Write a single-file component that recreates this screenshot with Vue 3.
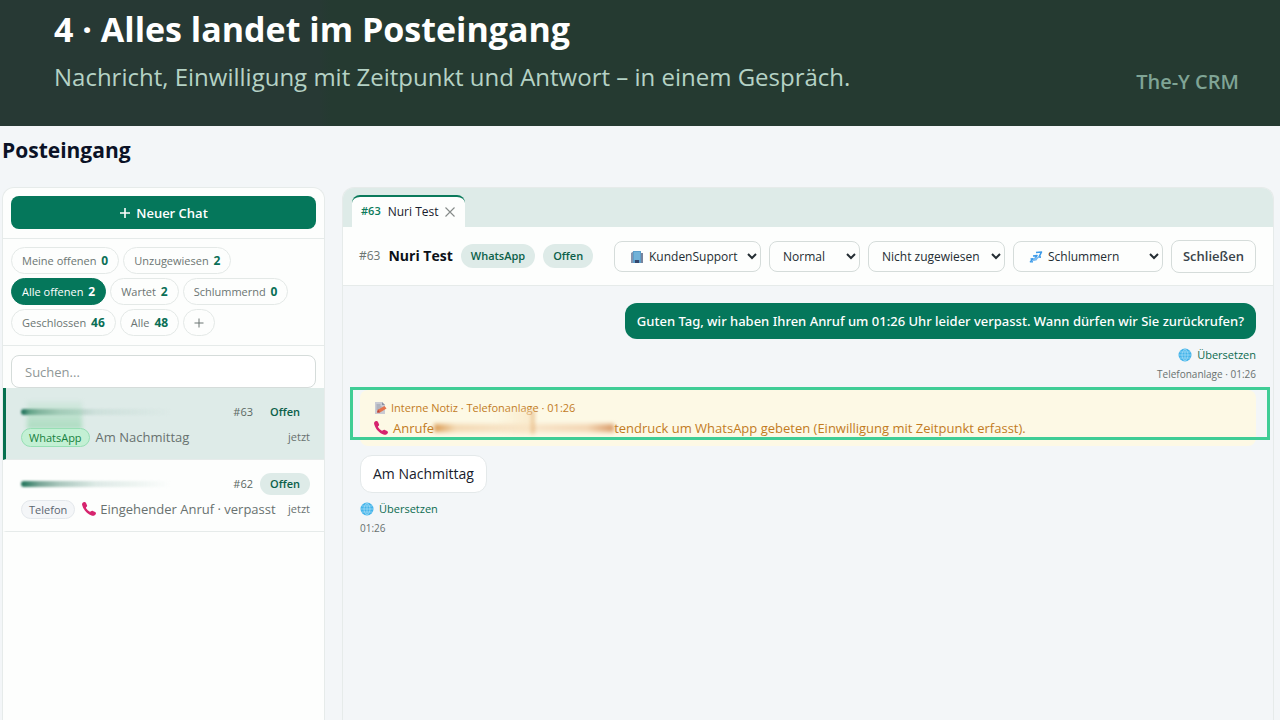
<script setup>
import { ref } from 'vue'

const filters = [
  { label: 'Meine offenen', count: 0 },
  { label: 'Unzugewiesen', count: 2 },
  { label: 'Alle offenen', count: 2, active: true },
  { label: 'Wartet', count: 2 },
  { label: 'Schlummernd', count: 0 },
  { label: 'Geschlossen', count: 46 },
  { label: 'Alle', count: 48 },
]
const team = ref('KundenSupport')
const priority = ref('Normal')
const assignee = ref('Nicht zugewiesen')
const snooze = ref('Schlummern')
const query = ref('')
</script>

<template>
  <div class="page">
    <header class="banner">
      <div>
        <h1>4 · Alles landet im Posteingang</h1>
        <p>Nachricht, Einwilligung mit Zeitpunkt und Antwort – in einem Gespräch.</p>
      </div>
      <span class="brand">The-Y CRM</span>
    </header>

    <h2 class="page-title">Posteingang</h2>

    <main class="columns">
      <aside class="sidebar">
        <div class="new-chat">
          <button type="button">
            <svg viewBox="0 0 12 12" width="12" height="12" aria-hidden="true"><path d="M6 1v10M1 6h10" stroke="currentColor" stroke-width="1.6" fill="none" /></svg>
            Neuer Chat
          </button>
        </div>
        <div class="filters">
          <button v-for="f in filters" :key="f.label" type="button" class="chip" :class="{ active: f.active }">{{ f.label }} <b>{{ f.count }}</b></button>
          <button type="button" class="chip plus" aria-label="Filter hinzufügen">
            <svg viewBox="0 0 10 10" width="10" height="10" aria-hidden="true"><path d="M5 0.5v9M0.5 5h9" stroke="currentColor" stroke-width="1" fill="none" /></svg>
          </button>
        </div>
        <div class="search">
          <input v-model="query" type="text" placeholder="Suchen..." aria-label="Suchen" />
        </div>
        <div class="conversation selected">
          <div class="line">
            <span class="redacted"></span>
            <span class="number">#63</span>
            <span class="state">Offen</span>
          </div>
          <div class="line second">
            <span class="smudge"></span>
            <span class="source whatsapp">WhatsApp</span>
            <span class="preview">Am Nachmittag</span>
            <span class="when">jetzt</span>
          </div>
        </div>
        <div class="conversation">
          <div class="line">
            <span class="redacted"></span>
            <span class="number">#62</span>
            <span class="state">Offen</span>
          </div>
          <div class="line second">
            <span class="source">Telefon</span>
            <span class="preview">
              <svg class="phone" viewBox="0 0 16 16" width="16" height="16" aria-hidden="true"><path d="M1.2 4.2C.6 2.500 1.800 1.200 3.300 1c.8-.1 1.300.3 1.700 1l1 2.200c.3.800 0 1.400-.600 1.900-.6.400-.5.900-.1 1.500.8 1.300 1.900 2.300 3.200 3 .6.300 1 .2 1.500-.3.500-.600 1.100-.800 1.900-.400l2.200 1.100c.8.500 1.100 1.200.700 2-.700 1.500-2.100 2.200-3.700 1.700C6.300 13.100 2.600 9.300 1.200 4.200z" fill="#d6246e" /></svg>
              Eingehender Anruf · verpasst
            </span>
            <span class="when">jetzt</span>
          </div>
        </div>
      </aside>

      <section class="thread">
        <nav class="tabs">
          <div class="tab">
            <a href="#"><b>#63</b> <span>Nuri Test</span></a>
            <button type="button" aria-label="Tab schließen">
              <svg viewBox="0 0 10 10" width="10" height="10" aria-hidden="true"><path d="M0.5 0.5l9 9M9.500 0.5l-9 9" stroke="#858b89" stroke-width="1.1" fill="none" /></svg>
            </button>
          </div>
        </nav>
        <div class="toolbar">
          <span class="id">#63</span>
          <strong>Nuri Test</strong>
          <span class="badge">WhatsApp</span>
          <span class="badge">Offen</span>
          <div class="controls">
            <div class="pick team">
              <svg viewBox="0 0 14 14" width="14" height="14" aria-hidden="true">
                <path d="M1 3l3-2v12H1z" fill="#8794ae" /><path d="M10 3h3v10h-3z" fill="#77839c" />
                <path d="M3 1h8v12H3z" fill="#5c9fcb" /><path d="M4 3h6M4 5h6M4 7h6M4 9h6" stroke="#88c5e5" stroke-width="1" />
                <path d="M5 10h4v3H5z" fill="#34476c" />
              </svg>
              <select v-model="team" aria-label="Team"><option>KundenSupport</option></select>
            </div>
            <div class="pick priority"><select v-model="priority" aria-label="Priorität"><option>Normal</option></select></div>
            <div class="pick assignee"><select v-model="assignee" aria-label="Zuweisung"><option>Nicht zugewiesen</option></select></div>
            <div class="pick snooze">
              <svg viewBox="0 0 14 14" width="14" height="14" aria-hidden="true">
                <path d="M7 2.500l5.500-.5-2.500 5 2 .1M4 6l4-.4-2.800 4 2.500-.2M1.500 9l2.500-.2-2.500 3 2.500-.1" stroke="#3d9be9" stroke-width="1.6" fill="none" stroke-linejoin="round" />
                <path d="M2 12l6-2.500 3-3-5 1z" fill="#7dbcf0" />
              </svg>
              <select v-model="snooze" aria-label="Schlummern"><option>Schlummern</option></select>
            </div>
            <button type="button" class="close">Schließen</button>
          </div>
        </div>

        <div class="messages">
          <div class="outgoing">
            <div class="bubble sent">Guten Tag, wir haben Ihren Anruf um 01:26 Uhr leider verpasst. Wann dürfen wir Sie zurückrufen?</div>
            <a href="#" class="translate">
              <svg viewBox="0 0 14 14" width="14" height="14" aria-hidden="true"><circle cx="7" cy="7" r="6.500" fill="#43b4ea" /><path d="M.5 7h13M1.800 4h10.400M1.800 10h10.400M7 .5v13M7 .5c-4 4-4 9 0 13M7 .5c4 4 4 9 0 13" stroke="#a9def6" stroke-width=".7" fill="none" /></svg>
              Übersetzen
            </a>
            <span class="meta">Telefonanlage · 01:26</span>
          </div>

          <div class="note">
            <div class="note-head">
              <svg viewBox="0 0 14 14" width="14" height="14" aria-hidden="true"><path d="M2 1h7l3 3v9H2z" fill="#c9cbd3" /><path d="M9 1v3h3z" fill="#8d93a5" /><path d="M3.500 4h4M3.500 6h5M3.500 8h3" stroke="#8b90a0" stroke-width=".8" /><path d="M4 11.500l1-3L11.500 5l2 2.500-6.500 4z" fill="#e4744d" /><path d="M4 11.500l1-3 2 3z" fill="#b9433f" /></svg>
              Interne Notiz · Telefonanlage · 01:26
            </div>
            <div class="note-body">
              <svg class="phone" viewBox="0 0 16 16" width="16" height="16" aria-hidden="true"><path d="M1.200 4.200C.6 2.500 1.800 1.200 3.300 1c.8-.1 1.300.3 1.700 1l1 2.200c.3.800 0 1.400-.600 1.900-.6.400-.5.900-.1 1.500.8 1.300 1.900 2.300 3.200 3 .6.300 1 .2 1.500-.3.500-.600 1.100-.800 1.900-.400l2.200 1.100c.8.500 1.100 1.200.700 2-.700 1.500-2.100 2.200-3.700 1.700C6.300 13.100 2.600 9.300 1.200 4.200z" fill="#d6246e" /></svg>
              <span>Anrufe</span><span class="blurred"></span><span>tendruck um WhatsApp gebeten (Einwilligung mit Zeitpunkt erfasst).</span>
            </div>
            <div class="highlight"></div>
          </div>

          <div class="incoming">
            <div class="bubble received">Am Nachmittag</div>
            <a href="#" class="translate">
              <svg viewBox="0 0 14 14" width="14" height="14" aria-hidden="true"><circle cx="7" cy="7" r="6.500" fill="#43b4ea" /><path d="M.5 7h13M1.800 4h10.400M1.800 10h10.400M7 .5v13M7 .5c-4 4-4 9 0 13M7 .5c4 4 4 9 0 13" stroke="#a9def6" stroke-width=".7" fill="none" /></svg>
              Übersetzen
            </a>
            <span class="meta">01:26</span>
          </div>
        </div>
      </section>
    </main>
  </div>
</template>

<style>
body { background: #f3f6f8; }
</style>

<style scoped>
.page {
  display: flex;
  flex-direction: column;
  min-height: 100vh;
  box-sizing: border-box;
  background: #f3f6f8;
  color: #18202c;
  font-family: "Open Sans", "Noto Sans", sans-serif;
  font-size: 12px;
  line-height: 18px;
}
.page * { box-sizing: border-box; }
svg { display: block; flex: none; }
button, input, select { font: inherit; margin: 0; }
button { cursor: pointer; }
a { text-decoration: none; }

.banner {
  display: flex;
  justify-content: space-between;
  align-items: flex-end;
  height: 126px;
  padding: 0 41px 32px 54px;
  background: linear-gradient(90deg, #273934 0, #273934 320px, #253a31 330px);
  white-space: nowrap;
}
.banner h1 { margin: 0; color: #fff; font-size: 34px; line-height: 44px; font-weight: 700; }
.banner p { margin: 9px 0 0; color: #b5d2c5; font-size: 24px; line-height: 34px; }
.brand { color: #7fa495; font-size: 20px; line-height: 24px; font-weight: 600; }

.page-title { margin: 8px 0 21px 2px; font-size: 21px; line-height: 32px; font-weight: 700; color: #0b1226; }

.columns { display: flex; flex: 1; gap: 17px; padding: 0 6px 0 2px; }
.sidebar, .thread {
  border: 1px solid #e6ebea;
  border-bottom: 0;
  border-radius: 12px 12px 0 0;
  overflow: hidden;
}
.sidebar { flex: none; width: 323px; background: #fdfefd; }
.thread { flex: 1; min-width: 0; display: flex; flex-direction: column; }

.new-chat { padding: 8px 8px 9px; border-bottom: 1px solid #e6ebea; }
.new-chat button {
  display: flex; align-items: center; justify-content: center; gap: 5px;
  width: 100%; height: 33px; border: 0; border-radius: 8px;
  background: #05775b; color: #fff; font-size: 13px; font-weight: 600;
}
.filters { display: flex; flex-wrap: wrap; gap: 4px; padding: 8px 8px 9px; border-bottom: 1px solid #e6ebea; }
.chip {
  height: 27px; padding: 0 10px; border: 1px solid #e4e9e7; border-radius: 14px;
  background: #fdfefd; color: #6b7572; font-size: 11px; line-height: 18px; white-space: nowrap;
}
.chip b { margin-left: 2px; color: #0a6f56; font-size: 12px; font-weight: 700; }
.chip.active { background: #05775b; border-color: #05775b; color: #fff; }
.chip.active b { color: #fff; }
.chip.plus { display: flex; align-items: center; }

.search { padding: 9px 8px 0; }
.search input {
  display: block; width: 100%; height: 33px; padding: 0 13px;
  border: 1px solid #d5dcda; border-radius: 8px; background: #fff; font-size: 13px; outline: 0;
}
.search input::placeholder { color: #8f9797; opacity: 1; }

.conversation { padding: 13px 14px 12px 15px; border-left: 3px solid transparent; border-bottom: 1px solid #e6ebea; height: 72px; }
.conversation.selected { background: #deebe8; border-left-color: #06704f; }
.line { display: flex; align-items: center; height: 22px; }
.second { position: relative; height: 20px; margin-top: 4px; }
.redacted { width: 150px; height: 6px; border-radius: 3px; background: linear-gradient(90deg, #1f7359, #78a596 12%, #a9c6bc 25%, rgba(190, 214, 207, .5) 50%, transparent); filter: blur(1px); }
.number { margin-left: auto; margin-right: 7px; color: #5b6864; font-size: 11px; }
.state { padding: 2px 10px; border-radius: 11px; background: #deebe8; color: #0b6049; font-size: 11px; font-weight: 600; }
.smudge { position: absolute; left: 6px; top: -26px; width: 55px; height: 28px; background: linear-gradient(rgba(150, 214, 175, .1), rgba(150, 214, 175, .7)); filter: blur(2px); }
.source {
  position: relative; height: 19px; padding: 0 7px; border: 1px solid #e4e8ec; border-radius: 10px;
  background: #f4f6f8; color: #5b6570; font-size: 11px; line-height: 17px;
}
.source.whatsapp { background: #c3f0d4; border-color: #96dfb4; color: #15803d; }
.preview { display: flex; align-items: center; gap: 3px; margin-left: 6px; color: #68716f; font-size: 13px; white-space: nowrap; }
.when { margin-left: auto; color: #68716f; font-size: 11px; }

.tabs { display: flex; align-items: flex-end; height: 39px; padding-left: 9px; background: #deebe8; }
.tab { display: flex; align-items: center; gap: 7px; height: 32px; padding: 0 10px 0 9px; border-top: 2px solid #0a7a5b; border-radius: 8px 8px 0 0; background: #fdfefd; }
.tab a { display: flex; gap: 7px; color: #18202c; font-weight: 500; }
.tab b { color: #0a7a5b; font-size: 11px; font-weight: 600; line-height: 16px; }
.tab button { padding: 0; border: 0; background: none; }

.toolbar { display: flex; align-items: center; gap: 8px; height: 59px; padding: 0 17px 0 16px; background: #fdfefd; border-bottom: 1px solid #e6ebea; white-space: nowrap; }
.id { color: #6b7572; font-size: 12px; }
.toolbar strong { font-size: 14px; font-weight: 700; color: #0c1118; }
.badge { padding: 3px 10px; border-radius: 12px; background: #deebe8; color: #0b6049; font-size: 11px; font-weight: 600; }
.controls { display: flex; align-items: center; gap: 8px; margin-left: auto; }
.pick { position: relative; }
.pick svg { position: absolute; left: 16px; top: 9px; }
.pick select { display: block; width: 100%; height: 31px; padding: 0 0 0 9px; border: 1px solid #d5dcda; border-radius: 8px; background: #fdfefd; color: #242d33; outline: 0; }
.team { width: 147px; }
.priority { width: 91px; }
.assignee { width: 137px; }
.snooze { width: 150px; }
.team select, .snooze select { padding-left: 30px; }
.close { height: 33px; padding: 0 11px; border: 1px solid #d5dcda; border-radius: 8px; background: #fdfefd; color: #39434a; font-size: 13px; font-weight: 600; }

.messages { display: flex; flex-direction: column; padding: 17px 17px 24px; }
.outgoing, .incoming { display: flex; flex-direction: column; align-items: flex-start; }
.outgoing { align-items: flex-end; }
.bubble { border-radius: 12px; line-height: 20px; }
.sent { padding: 8px 12px; background: #05775b; color: #fff; font-family: "Noto Sans", "Open Sans", sans-serif; font-size: 13px; font-weight: 500; }
.received { padding: 8px 12px; border: 1px solid #e4e9ea; background: #fff; color: #18202c; font-size: 14px; }
.translate { display: flex; align-items: center; gap: 5px; margin-top: 7px; color: #0b6b50; font-size: 11px; }
.meta { margin-top: 2px; color: #68716f; font-size: 10px; line-height: 16px; }
.note { position: relative; height: 56px; margin: 8px 0 9px; padding: 8px 13px; border-radius: 8px; background: #fdf9e5; color: #c27b1e; }
.note-head { display: flex; align-items: center; gap: 4px; height: 20px; font-size: 11px; font-weight: 500; }
.note-body { display: flex; align-items: center; height: 20px; font-size: 13px; font-weight: 500; white-space: nowrap; }
.note-body svg { margin-right: 4px; }
.blurred { position: relative; width: 180px; height: 8px; background: linear-gradient(90deg, #d99850, #f3d9b4 12%, #f8e6cc 50%, #f3d6b4 85%, #d99a68); filter: blur(2px); }
.blurred::after { content: ""; position: absolute; left: 60px; top: -14px; width: 38px; height: 24px; background: linear-gradient(90deg, transparent, rgba(248, 226, 190, .6)); border-right: 2px solid #dfa664; }
.highlight { position: absolute; inset: -3px -14px 6px -10px; border: 3px solid #3fcd96; }
</style>
